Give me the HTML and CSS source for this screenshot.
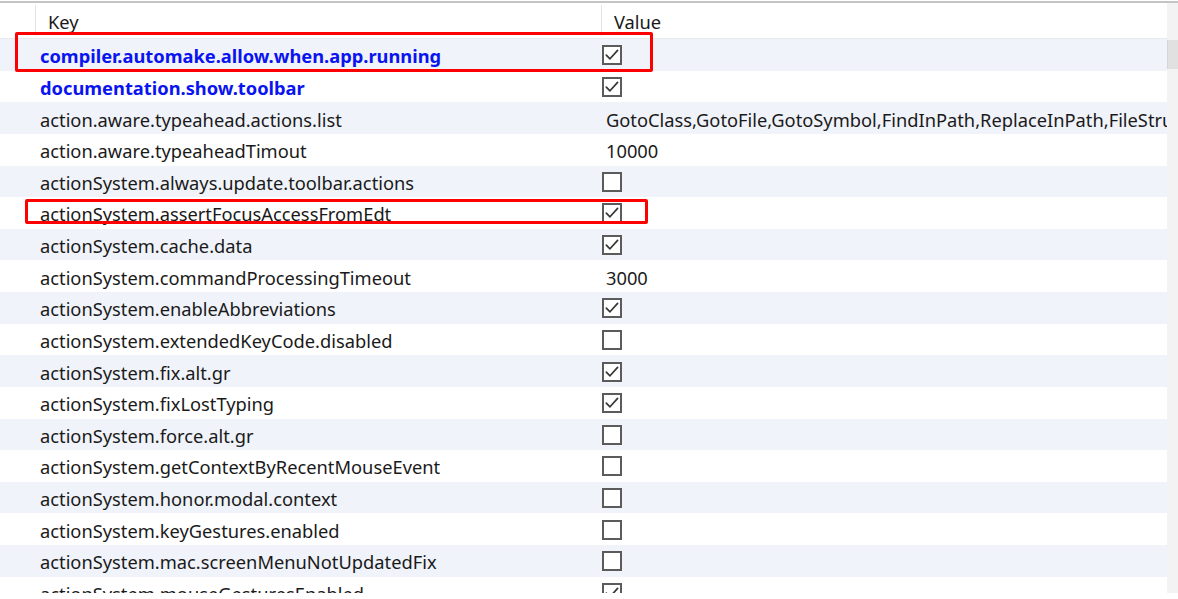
FILE: index.html
```html
<!DOCTYPE html>
<html>
<head>
<meta charset="utf-8">
<link rel="stylesheet" href="styles.css">
</head>
<body>
<div class="frame">
  <div class="viewport">
    <div class="table">
      <div class="header">
        <div class="hcell lead"></div>
        <div class="hcell">Key</div>
        <div class="hcell">Value</div>
      </div>
      <div class="row odd"><div></div><div class="key bold">compiler.automake.allow.when.app.running</div><div class="val"><span class="cb"><svg viewBox="0 0 16 16" width="16" height="16"><polyline points="2.3,8.2 6,11.8 13.6,3.4"/></svg></span></div></div>
      <div class="row"><div></div><div class="key bold">documentation.show.toolbar</div><div class="val"><span class="cb"><svg viewBox="0 0 16 16" width="16" height="16"><polyline points="2.3,8.2 6,11.8 13.6,3.4"/></svg></span></div></div>
      <div class="row odd"><div></div><div class="key">action.aware.typeahead.actions.list</div><div class="val text">GotoClass,GotoFile,GotoSymbol,FindInPath,ReplaceInPath,FileStructurePopup,SelectIn</div></div>
      <div class="row"><div></div><div class="key">action.aware.typeaheadTimout</div><div class="val text">10000</div></div>
      <div class="row odd"><div></div><div class="key">actionSystem.always.update.toolbar.actions</div><div class="val"><span class="cb"></span></div></div>
      <div class="row"><div></div><div class="key">actionSystem.assertFocusAccessFromEdt</div><div class="val"><span class="cb"><svg viewBox="0 0 16 16" width="16" height="16"><polyline points="2.3,8.2 6,11.8 13.6,3.4"/></svg></span></div></div>
      <div class="row odd"><div></div><div class="key">actionSystem.cache.data</div><div class="val"><span class="cb"><svg viewBox="0 0 16 16" width="16" height="16"><polyline points="2.3,8.2 6,11.8 13.6,3.4"/></svg></span></div></div>
      <div class="row"><div></div><div class="key">actionSystem.commandProcessingTimeout</div><div class="val text">3000</div></div>
      <div class="row odd"><div></div><div class="key">actionSystem.enableAbbreviations</div><div class="val"><span class="cb"><svg viewBox="0 0 16 16" width="16" height="16"><polyline points="2.3,8.2 6,11.8 13.6,3.4"/></svg></span></div></div>
      <div class="row"><div></div><div class="key">actionSystem.extendedKeyCode.disabled</div><div class="val"><span class="cb"></span></div></div>
      <div class="row odd"><div></div><div class="key">actionSystem.fix.alt.gr</div><div class="val"><span class="cb"><svg viewBox="0 0 16 16" width="16" height="16"><polyline points="2.3,8.2 6,11.8 13.6,3.4"/></svg></span></div></div>
      <div class="row"><div></div><div class="key">actionSystem.fixLostTyping</div><div class="val"><span class="cb"><svg viewBox="0 0 16 16" width="16" height="16"><polyline points="2.3,8.2 6,11.8 13.6,3.4"/></svg></span></div></div>
      <div class="row odd"><div></div><div class="key">actionSystem.force.alt.gr</div><div class="val"><span class="cb"></span></div></div>
      <div class="row"><div></div><div class="key">actionSystem.getContextByRecentMouseEvent</div><div class="val"><span class="cb"></span></div></div>
      <div class="row odd"><div></div><div class="key">actionSystem.honor.modal.context</div><div class="val"><span class="cb"></span></div></div>
      <div class="row"><div></div><div class="key">actionSystem.keyGestures.enabled</div><div class="val"><span class="cb"></span></div></div>
      <div class="row odd"><div></div><div class="key">actionSystem.mac.screenMenuNotUpdatedFix</div><div class="val"><span class="cb"></span></div></div>
      <div class="row"><div></div><div class="key">actionSystem.mouseGesturesEnabled</div><div class="val"><span class="cb"><svg viewBox="0 0 16 16" width="16" height="16"><polyline points="2.3,8.2 6,11.8 13.6,3.4"/></svg></span></div></div>
    </div>
    <div class="scrollbar"><div class="thumb"></div></div>
    <div class="mark mark1"></div>
    <div class="mark mark2"></div>
  </div>
</div>
</body>
</html>
```
FILE: styles.css
```css
html, body {
  margin: 0;
  padding: 0;
  background: #ffffff;
}
body {
  font-family: "Noto Sans", "Open Sans", sans-serif;
  font-size: 18.3px;
  color: #1a1a1a;
}
.frame {
  padding-top: 1px;
  width: 1178px;
  height: 599px;
  box-sizing: border-box;
}
.viewport {
  position: relative;
  border-top: 2px solid #c4c4c4;
  height: 590px;
  display: flex;
  overflow: hidden;
}
.table {
  width: 1167px;
  flex: none;
  overflow: hidden;
}
.header {
  display: grid;
  grid-template-columns: 36px 566px 1fr;
  height: 36px;
  border-bottom: 1px solid #e6e9ee;
  box-sizing: border-box;
}
.hcell {
  padding-left: 12px;
  padding-top: 7px;
  line-height: 24px;
  position: relative;
}
.hcell.lead {
  padding: 0;
}
.hcell:not(:last-child)::after {
  content: "";
  position: absolute;
  right: 0;
  top: 2px;
  bottom: 2px;
  width: 1px;
  background: #e3e3e3;
}
.row {
  display: grid;
  grid-template-columns: 36px 566px 1fr;
  height: 31.625px;
  align-items: center;
}
.row.odd {
  background: #f0f3f9;
}
.key {
  padding-left: 4px;
  padding-top: 2px;
  white-space: nowrap;
}
.key.bold {
  font-weight: 700;
  color: #0a14f0;
}
.val {
  white-space: nowrap;
  overflow: hidden;
  display: flex;
  align-items: center;
}
.val.text {
  padding-left: 4px;
  padding-top: 2px;
}
.cb {
  display: block;
  width: 20px;
  height: 20px;
  box-sizing: border-box;
  border: 2px solid #5b5b5b;
  background: #ffffff;
  margin-top: 1px;
}
.cb svg {
  display: block;
}
.cb polyline {
  fill: none;
  stroke: #363636;
  stroke-width: 1.7;
  stroke-linecap: round;
  stroke-linejoin: round;
}
.scrollbar {
  flex: none;
  width: 11px;
  height: 590px;
  background: #f3f3f3;
}
.thumb {
  margin-top: 37px;
  height: 29px;
  background: #e1e1e1;
  border-left: 1px solid #d6d6d6;
}
.mark {
  position: absolute;
  border: 3px solid #ff0000;
  border-radius: 2px;
  box-sizing: border-box;
}
.mark1 {
  left: 15px;
  top: 29px;
  width: 638px;
  height: 40px;
}
.mark2 {
  left: 25px;
  top: 196px;
  width: 623px;
  height: 25px;
}
```
